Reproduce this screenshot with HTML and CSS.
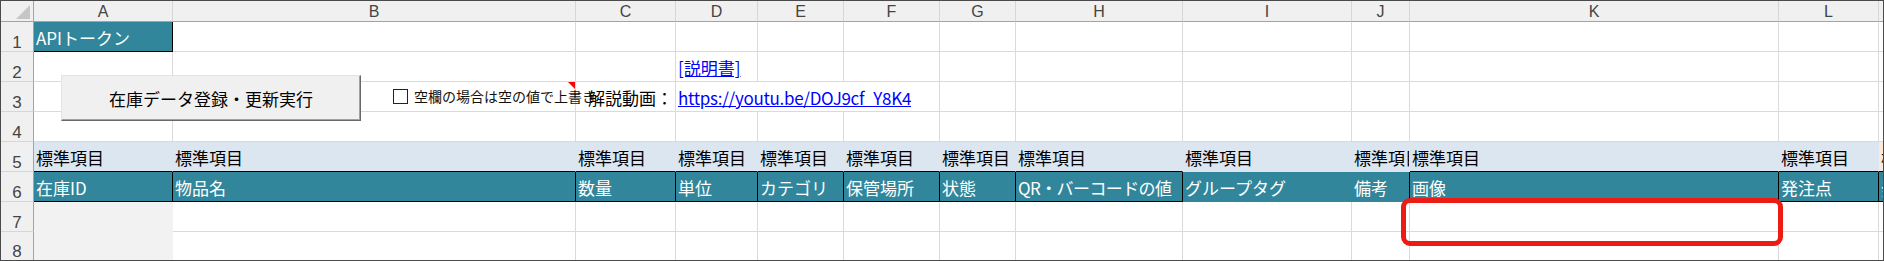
FILE: index.html
```html
<!DOCTYPE html>
<html>
<head>
    <meta charset="utf-8">
    <link rel="stylesheet" href="styles.css">
</head>
<body>
    <div class="frame">
        <div class="sheet">
            <!-- column headers -->
            <div class="c corner"><span class="tri"></span></div>
            <div class="c ch">A</div>
            <div class="c ch">B</div>
            <div class="c ch">C</div>
            <div class="c ch">D</div>
            <div class="c ch">E</div>
            <div class="c ch">F</div>
            <div class="c ch">G</div>
            <div class="c ch">H</div>
            <div class="c ch">I</div>
            <div class="c ch">J</div>
            <div class="c ch">K</div>
            <div class="c ch">L</div>
            <div class="c ch m"></div>

            <!-- row 1 -->
            <div class="c rh">1</div>
            <div class="c teal bk-r bk-b">APIトークン</div>
            <div class="c"></div>
            <div class="c"></div>
            <div class="c"></div>
            <div class="c"></div>
            <div class="c"></div>
            <div class="c"></div>
            <div class="c"></div>
            <div class="c"></div>
            <div class="c"></div>
            <div class="c"></div>
            <div class="c"></div>
            <div class="c m"></div>

            <!-- row 2 -->
            <div class="c rh">2</div>
            <div class="c"></div>
            <div class="c"></div>
            <div class="c"></div>
            <div class="c"><a class="link" href="#">[説明書]</a></div>
            <div class="c"></div>
            <div class="c"></div>
            <div class="c"></div>
            <div class="c"></div>
            <div class="c"></div>
            <div class="c"></div>
            <div class="c"></div>
            <div class="c"></div>
            <div class="c m"></div>

            <!-- row 3 -->
            <div class="c rh">3</div>
            <div class="c"></div>
            <div class="c has-note"><span class="note"></span></div>
            <div class="c right">解説動画：</div>
            <div class="c span3"><a class="link url" href="#">https://youtu.be/DOJ9cf_Y8K4</a></div>
            <div class="c"></div>
            <div class="c"></div>
            <div class="c"></div>
            <div class="c"></div>
            <div class="c"></div>
            <div class="c"></div>
            <div class="c m"></div>

            <!-- row 4 -->
            <div class="c rh">4</div>
            <div class="c"></div>
            <div class="c"></div>
            <div class="c"></div>
            <div class="c"></div>
            <div class="c"></div>
            <div class="c"></div>
            <div class="c"></div>
            <div class="c"></div>
            <div class="c"></div>
            <div class="c"></div>
            <div class="c"></div>
            <div class="c"></div>
            <div class="c m"></div>

            <!-- row 5 -->
            <div class="c rh">5</div>
            <div class="c blue bk-b">標準項目</div>
            <div class="c blue bk-b">標準項目</div>
            <div class="c blue bk-b">標準項目</div>
            <div class="c blue bk-b">標準項目</div>
            <div class="c blue bk-b">標準項目</div>
            <div class="c blue bk-b">標準項目</div>
            <div class="c blue bk-b">標準項目</div>
            <div class="c blue bk-b">標準項目</div>
            <div class="c blue">標準項目</div>
            <div class="c blue">標準項目</div>
            <div class="c blue bk-b">標準項目</div>
            <div class="c blue bk-b">標準項目</div>
            <div class="c peach bk-b m">標準項目</div>

            <!-- row 6 -->
            <div class="c rh">6</div>
            <div class="c teal bk-r bk-b">在庫ID</div>
            <div class="c teal bk-r bk-b">物品名</div>
            <div class="c teal bk-r bk-b">数量</div>
            <div class="c teal bk-r bk-b">単位</div>
            <div class="c teal bk-r bk-b">カテゴリ</div>
            <div class="c teal bk-r bk-b">保管場所</div>
            <div class="c teal bk-r bk-b">状態</div>
            <div class="c teal bk-r bk-b tight">QR・バーコードの値</div>
            <div class="c teal">グループタグ</div>
            <div class="c teal bk-r">備考</div>
            <div class="c teal bk-r bk-b">画像</div>
            <div class="c teal bk-r bk-b">発注点</div>
            <div class="c teal bk-b m">発注数</div>

            <!-- row 7 -->
            <div class="c rh">7</div>
            <div class="c grey"></div>
            <div class="c"></div>
            <div class="c"></div>
            <div class="c"></div>
            <div class="c"></div>
            <div class="c"></div>
            <div class="c"></div>
            <div class="c"></div>
            <div class="c"></div>
            <div class="c"></div>
            <div class="c"></div>
            <div class="c"></div>
            <div class="c m"></div>

            <!-- row 8 -->
            <div class="c rh">8</div>
            <div class="c grey"></div>
            <div class="c"></div>
            <div class="c"></div>
            <div class="c"></div>
            <div class="c"></div>
            <div class="c"></div>
            <div class="c"></div>
            <div class="c"></div>
            <div class="c"></div>
            <div class="c"></div>
            <div class="c"></div>
            <div class="c"></div>
            <div class="c m"></div>
        </div>

        <!-- controls floating over the sheet -->
        <button class="run-button">在庫データ登録・更新実行</button>
        <label class="check">
            <span class="check-box"></span>
            <span>空欄の場合は空の値で上書き</span>
        </label>
        <div class="callout"></div>
    </div>
</body>
</html>
```

FILE: styles.css
```css
/* Planilha */
body {
    margin: 0;
    background-color: #fff;
}

.frame {
    position: relative;
    width: 1884px;
    height: 261px;
    box-sizing: border-box;
    border: 1px solid #4a4a4a;
    overflow: hidden;
    font-family: "Noto Sans CJK JP", sans-serif;
}

.sheet {
    display: grid;
    grid-template-columns: 33px 139px 403px 100px 82px 86px 96px 76px 167px 169px 58px 369px 100px 1fr;
    grid-template-rows: 21px repeat(7, 30px) 1fr;
    height: 100%;
}

.c {
    box-sizing: border-box;
    min-width: 0;
    display: flex;
    align-items: flex-end;
    padding: 0 2px 1px;
    border-right: 1px solid #dadada;
    border-bottom: 1px solid #dadada;
    overflow: hidden;
    white-space: nowrap;
    font-size: 17px;
    line-height: 24px;
    color: #000;
}

.corner {
    background-color: #f0f0f0;
    border-right-color: #a3a3a3;
    border-bottom-color: #a3a3a3;
    justify-content: flex-end;
    padding: 0 3px 2px 0;
}

.tri {
    width: 14px;
    height: 14px;
    background-color: #c6c6c6;
    clip-path: polygon(100% 0, 100% 100%, 0 100%);
}

.ch {
    background-color: #f0f0f0;
    border-right-color: #d6d6d6;
    border-bottom-color: #a3a3a3;
    justify-content: center;
    align-items: center;
    padding: 2px 0 0;
    font-family: "Liberation Sans", sans-serif;
    font-size: 16px;
    line-height: 18px;
    color: #444;
}

.rh {
    background-color: #f0f0f0;
    border-right-color: #a3a3a3;
    border-bottom-color: #d6d6d6;
    justify-content: center;
    padding: 0;
    font-family: "Liberation Sans Narrow", "Liberation Sans", sans-serif;
    font-size: 17px;
    line-height: 17px;
    color: #444;
}

.teal {
    background-color: #31869b;
    color: #fff;
    border-color: transparent;
}
.blue {
    background-color: #dce6f1;
    border-color: transparent;
}
.peach {
    background-color: #fde9d9;
    border-color: transparent;
}
.grey {
    background-color: #f2f2f2;
    border-color: transparent;
}
.bk-r {
    border-right-color: #000;
}
.bk-b {
    border-bottom-color: #000;
}
.m {
    border-right: 0;
}
.sheet > .c:nth-last-child(-n+14) {
    border-bottom: 0;
}

.right {
    justify-content: flex-end;
}
.span3 {
    grid-column: span 3;
}
.tight {
    letter-spacing: -0.6px;
}

.link {
    color: #0000ff;
    text-decoration: underline;
}
.url {
    letter-spacing: -0.3px;
}

/* marcador de comentário */
.has-note {
    position: relative;
}
.note {
    position: absolute;
    top: 0;
    right: 0;
    width: 7px;
    height: 7px;
    background-color: #f00;
    clip-path: polygon(0 0, 100% 0, 100% 100%);
}

.run-button {
    position: absolute;
    left: 60px;
    top: 74px;
    width: 300px;
    height: 46px;
    box-sizing: border-box;
    background-color: #f0f0f0;
    border: 1px solid;
    border-color: #e3e3e3 #696969 #696969 #e3e3e3;
    box-shadow: inset -1px -1px 0 #a0a0a0;
    font-family: "Noto Sans CJK JP", sans-serif;
    font-size: 17px;
    color: #000;
    padding: 0;
}

.check {
    position: absolute;
    left: 392px;
    top: 86px;
    display: flex;
    align-items: center;
    gap: 6px;
    font-size: 14px;
    line-height: 18px;
    color: #111;
}
.check-box {
    width: 15px;
    height: 15px;
    box-sizing: border-box;
    border: 1px solid #222;
    background-color: #fff;
}

.callout {
    position: absolute;
    left: 1400px;
    top: 197px;
    width: 382px;
    height: 48px;
    box-sizing: border-box;
    border: 5px solid #ec1b14;
    border-radius: 9px;
}
```
